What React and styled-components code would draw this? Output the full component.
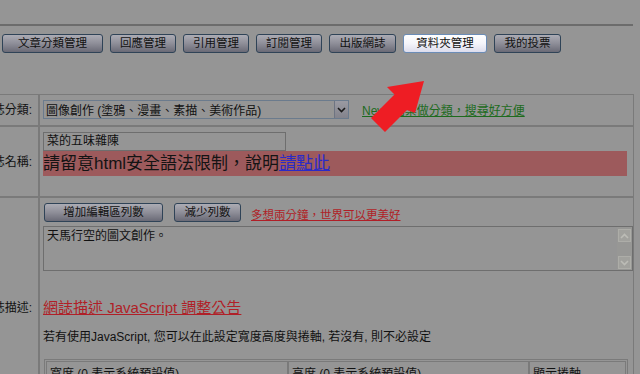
import React from 'react'
import styled, { createGlobalStyle } from 'styled-components'

const GlobalStyle = createGlobalStyle`
  html, body {
    margin: 0;
    padding: 0;
    background: #959595;
  }
  body {
    font-family: "Liberation Sans", "Noto Sans CJK TC", sans-serif;
    font-size: 12px;
    color: #111;
    overflow: hidden;
  }
`

const Page = styled.div`
  position: relative;
  width: 640px;
  height: 374px;
  overflow: hidden;
`

const TopRule = styled.div`
  width: 633px;
  height: 24px;
  border-bottom: 2px solid #6c6c6c;
`

const TabBar = styled.div`
  display: flex;
  gap: 7px;
  padding: 8px 0 0 2px;
`

const Button = styled.button`
  box-sizing: border-box;
  width: ${p => p.$w}px;
  height: 19px;
  padding: 0;
  border: 1px solid ${p => (p.$active ? '#6b8cb6' : '#2f4357')};
  border-radius: 3px;
  background: ${p =>
    p.$active
      ? 'linear-gradient(#ffffff, #f4f4fa 50%, #dcdcec)'
      : 'linear-gradient(#acacb4, #8e8e98 50%, #6a6a76)'};
  font-family: "Liberation Sans", "Noto Sans CJK TC", sans-serif;
  font-size: 11.5px;
  line-height: 17px;
  color: #111;
`

const Form = styled.div`
  display: grid;
  grid-template-columns: 39px 595px;
  margin-top: 41px;
`

const LabelCell = styled.div`
  box-sizing: border-box;
  display: flex;
  align-items: ${p => (p.$top ? 'flex-start' : 'center')};
  justify-content: flex-end;
  padding: ${p => (p.$top ? `${p.$top}px` : '0')} 6px 0 0;
  border: 1px solid #7a7a7a;
  border-left: none;
  overflow: hidden;
  white-space: nowrap;
  line-height: 16px;
`

const FieldCell = styled.div`
  box-sizing: border-box;
  border: 1px solid #7a7a7a;
  padding: ${p => p.$pad};
  display: ${p => (p.$row ? 'flex' : 'block')};
  align-items: center;
  min-width: 0;
`

const SelectBox = styled.div`
  box-sizing: border-box;
  display: flex;
  align-items: center;
  width: 306px;
  height: 19px;
  border: 1px solid #6b7b8d;
  padding-left: 2px;
`

const SelectText = styled.span`
  flex: 1;
  white-space: nowrap;
`

const SelectArrow = styled.span`
  box-sizing: border-box;
  display: flex;
  align-items: center;
  justify-content: center;
  width: 14px;
  height: 17px;
  background: linear-gradient(#9a9aa2, #83838c);
  border-left: 1px solid #6e7482;
`

const Link = styled.a`
  color: ${p => p.$color};
  text-decoration: underline;
  font-size: ${p => p.$size || 12}px;
  white-space: nowrap;
`

const NoteLink = styled(Link)`
  margin-left: 13px;
`

const TextInput = styled.div`
  box-sizing: border-box;
  width: 243px;
  height: 19px;
  border: 1px solid #6e6e6e;
  padding: 1px 3px;
  line-height: 15px;
`

const Warning = styled.div`
  width: 584px;
  height: 25px;
  background: #9d5a5c;
  font-size: 17px;
  line-height: 25px;
  color: #141414;
  white-space: nowrap;
`

const Actions = styled.div`
  display: flex;
  align-items: flex-end;
  gap: 11px;
  padding-left: 1px;
`

const Hint = styled(Link)`
  margin-left: -1px;
  font-size: 11.5px;
  line-height: 14px;
`

const TextBox = styled.div`
  box-sizing: border-box;
  display: flex;
  height: 45px;
  margin-top: 4px;
  border: 1px solid #6e6e6e;
`

const TextBody = styled.div`
  flex: 1;
  padding: 2px 3px;
  line-height: 15px;
`

const ScrollBar = styled.div`
  display: flex;
  flex-direction: column;
  justify-content: space-between;
  width: 15px;
  padding: 2px 0 1px;
  background: #979795;
`

const ScrollButton = styled.span`
  box-sizing: border-box;
  display: flex;
  align-items: center;
  justify-content: center;
  height: 13px;
  margin: 0 1px;
  background: #a1a19d;
  border: 1px solid #adada8;
`

const Notice = styled.div`
  margin-top: 28px;
  line-height: 18px;
`

const Help = styled.div`
  margin-top: 11px;
  line-height: 16px;
  white-space: nowrap;
`

const SizeTable = styled.div`
  box-sizing: border-box;
  display: grid;
  grid-template-columns: 242px 241px 1fr;
  width: 584px;
  margin: 14px 0 0 1px;
  border: 1px solid #7a7a7a;
  padding: 1px;
`

const SizeHead = styled.div`
  border: 1px solid #7a7a7a;
  padding: 4px 3px;
  line-height: 16px;
  white-space: nowrap;
`

const Pointer = styled.svg`
  position: absolute;
  left: 365px;
  top: 76px;
`

const Chevron = ({ up, color }) => (
  <svg width="9" height="6" viewBox="0 0 9 6">
    <path
      d={up ? 'M1 5 L4.5 1.5 L8 5' : 'M1 1 L4.5 4.5 L8 1'}
      fill="none"
      stroke={color}
      strokeWidth="1.6"
    />
  </svg>
)

const tabs = [
  ['文章分類管理', 101],
  ['回應管理', 66],
  ['引用管理', 66],
  ['訂閱管理', 66],
  ['出版網誌', 67],
  ['資料夾管理', 84, true],
  ['我的投票', 67],
]

export default function App() {
  return (
    <Page>
      <GlobalStyle />
      <TopRule />
      <TabBar>
        {tabs.map(([label, w, active]) => (
          <Button key={label} $w={w} $active={active}>{label}</Button>
        ))}
      </TabBar>

      <Form>
        <LabelCell>網誌分類:</LabelCell>
        <FieldCell $row $pad="5px 1px 6px 3px">
          <SelectBox>
            <SelectText>圖像創作 (塗鴉、漫畫、素描、美術作品)</SelectText>
            <SelectArrow><Chevron color="#1a1a1a" /></SelectArrow>
          </SelectBox>
          <NoteLink $color="#1d6b1d">New! 檔案做分類，搜尋好方便</NoteLink>
        </FieldCell>

        <LabelCell>網誌名稱:</LabelCell>
        <FieldCell $pad="5px 0 20px 3px">
          <TextInput>菜的五味雜陳</TextInput>
          <Warning>
            請留意html安全語法限制，說明<Link $color="#2a2ac8" $size={17}>請點此</Link>
          </Warning>
        </FieldCell>

        <LabelCell $top={102}>網誌描述:</LabelCell>
        <FieldCell $pad="5px 0 20px 3px">
          <Actions>
            <Button $w={119}>增加編輯區列數</Button>
            <Button $w={67}>減少列數</Button>
            <Hint $color="#b01f27">多想兩分鐘，世界可以更美好</Hint>
          </Actions>
          <TextBox>
            <TextBody>天馬行空的圖文創作。</TextBody>
            <ScrollBar>
              <ScrollButton><Chevron up color="#bcbcb6" /></ScrollButton>
              <ScrollButton><Chevron color="#bcbcb6" /></ScrollButton>
            </ScrollBar>
          </TextBox>
          <Notice>
            <Link $color="#b01f27" $size={15}>網誌描述 JavaScript 調整公告</Link>
          </Notice>
          <Help>若有使用JavaScript, 您可以在此設定寬度高度與捲軸, 若沒有, 則不必設定</Help>
          <SizeTable>
            <SizeHead>寬度 (0 表示系統預設值)</SizeHead>
            <SizeHead>高度 (0 表示系統預設值)</SizeHead>
            <SizeHead>顯示捲軸</SizeHead>
          </SizeTable>
        </FieldCell>
      </Form>

      <Pointer width="66" height="60" viewBox="0 0 66 60">
        <polygon
          points="59,5 50,37 42,34 20,56 6,42 29.5,18.5 22,11"
          fill="#ee1d24"
        />
      </Pointer>
    </Page>
  )
}
